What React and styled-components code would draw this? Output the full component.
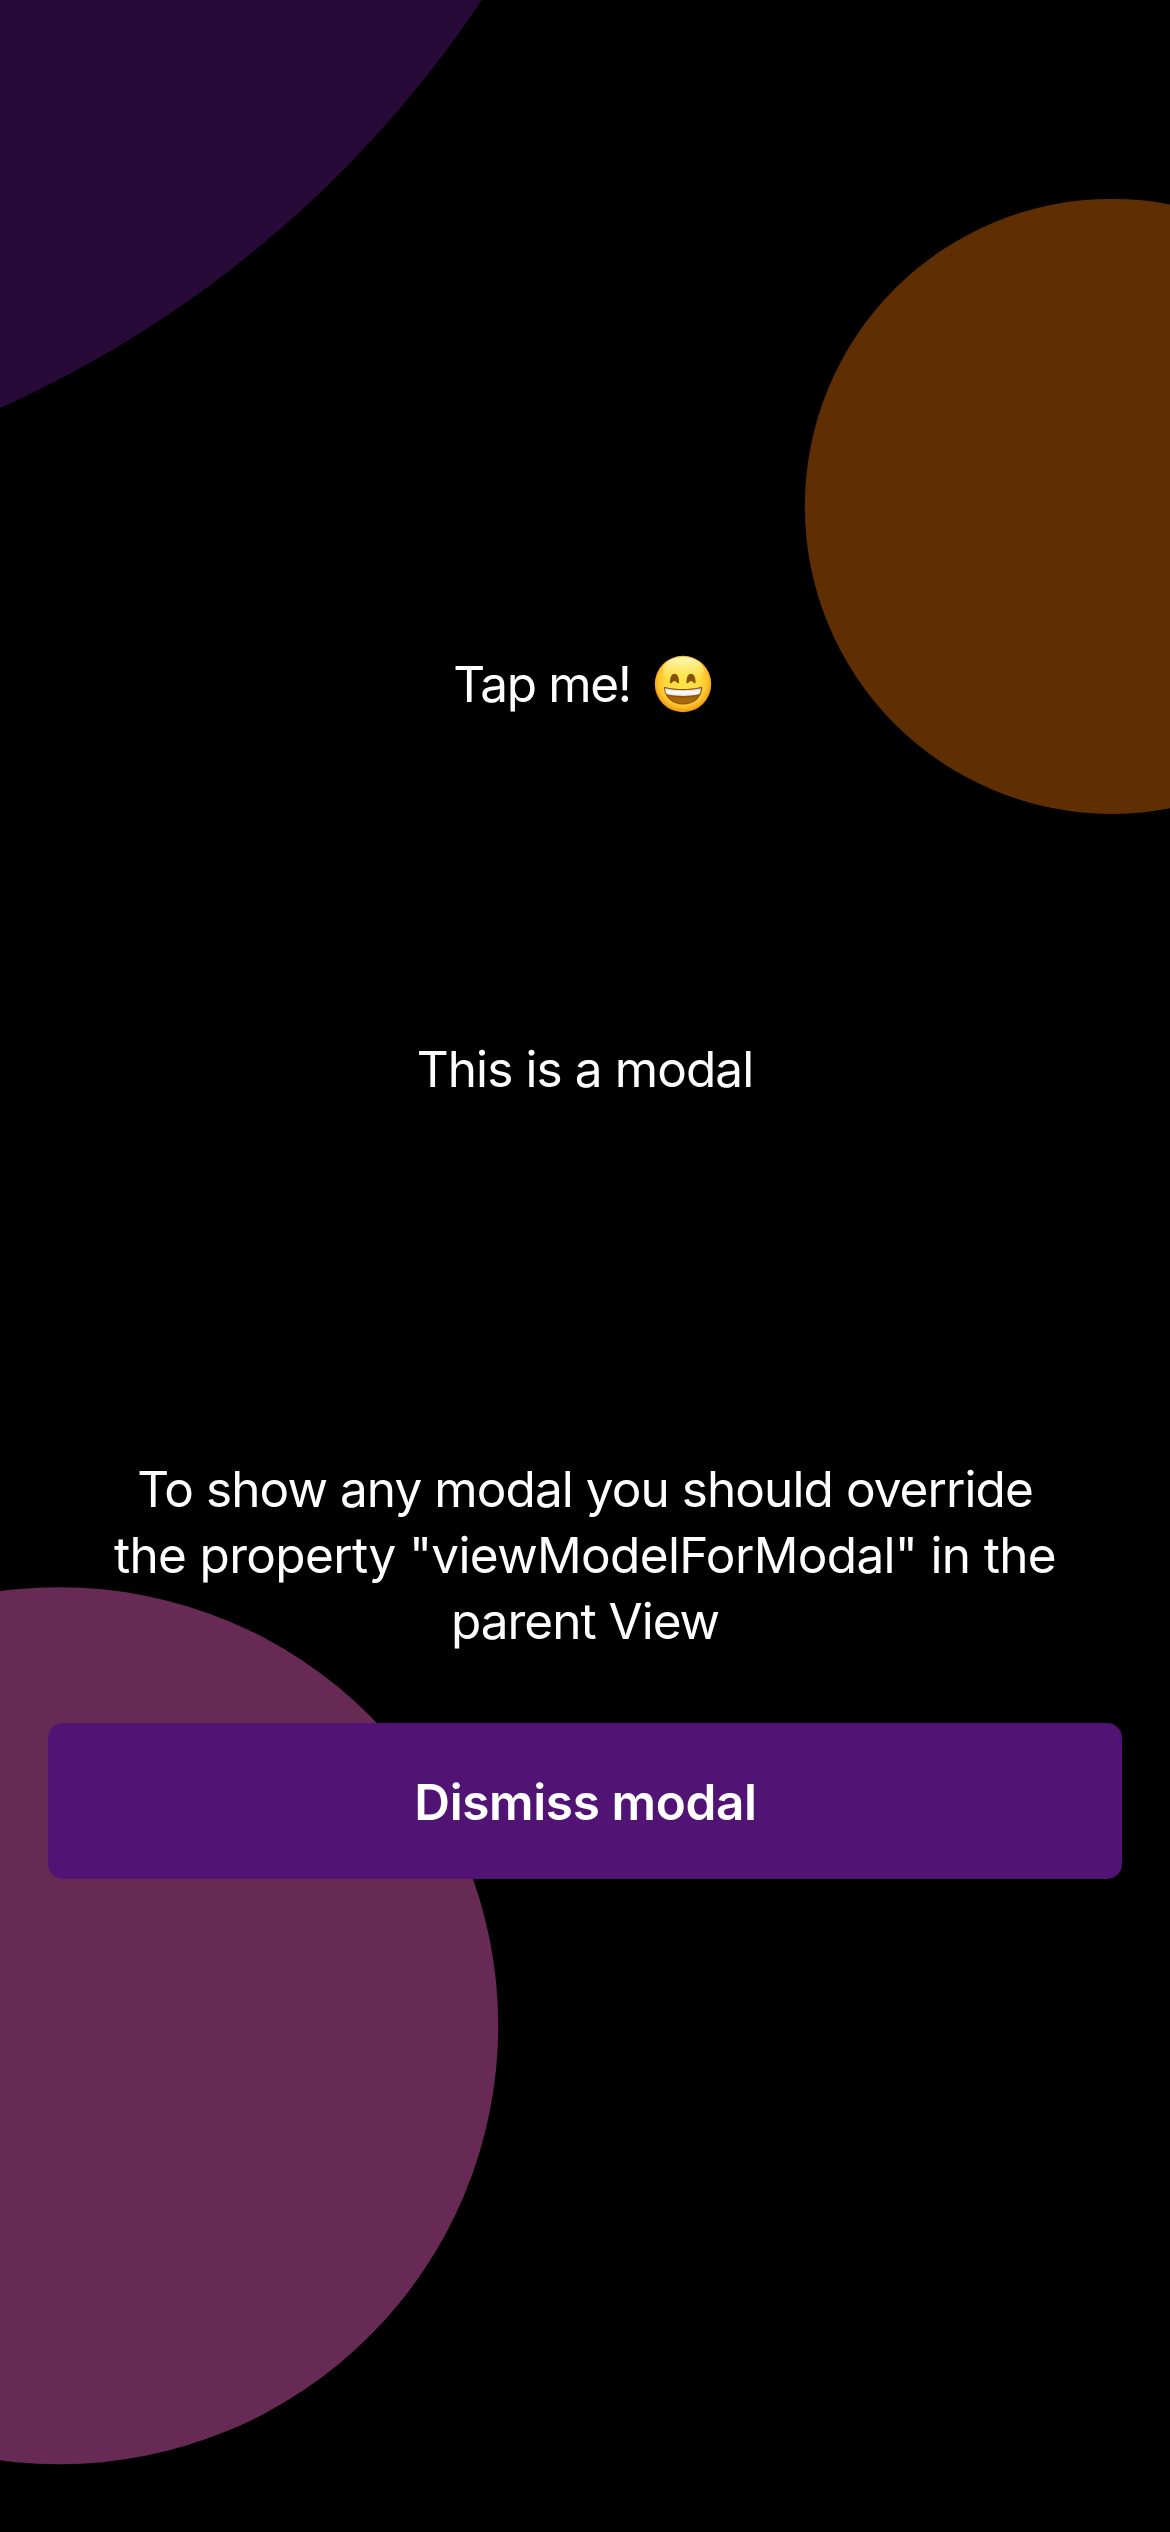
import React from "react";
import styled, { createGlobalStyle } from "styled-components";

const GlobalStyle = createGlobalStyle`
  * { box-sizing: border-box; }
  body { margin: 0; background: #000; }
`;

const Screen = styled.main`
  position: relative;
  width: 1170px;
  height: 2532px;
  overflow: hidden;
  background: #000;
  color: #fff;
  font-family: Inter, "Liberation Sans", sans-serif;
  font-size: 49.5px;
`;

const Bubble = styled.div`
  position: absolute;
  left: ${(p) => p.$x}px;
  top: ${(p) => p.$y}px;
  width: ${(p) => p.$size}px;
  height: ${(p) => p.$size}px;
  border-radius: 50%;
  background: ${(p) => p.$color};
  transform: translate(-50%, -50%);
`;

const Content = styled.div`
  position: relative;
  display: flex;
  flex-direction: column;
  height: 100%;
  padding: 651px 48px 0;
`;

const TapLabel = styled.button`
  display: flex;
  align-items: center;
  justify-content: center;
  align-self: center;
  gap: 23px;
  height: 66px;
  padding: 0 5px 0 0;
  border: 0;
  background: none;
  color: inherit;
  font: inherit;
  letter-spacing: -1.35px;
`;

const Emoji = styled.svg`
  display: block;
  width: 58px;
  height: 58px;
`;

const Title = styled.p`
  margin: 319px 0 0;
  line-height: 66px;
  text-align: center;
  letter-spacing: -0.9px;
`;

const Description = styled.p`
  margin: 354px 0 0;
  line-height: 66px;
  text-align: center;
`;

const Line = styled.span`
  display: block;
  white-space: nowrap;
  letter-spacing: ${(p) => p.$tracking}px;
`;

const DismissButton = styled.button`
  height: 156px;
  margin-top: 69px;
  padding: 2px 0 0 1px;
  border: 0;
  border-radius: 15px;
  background: #511474;
  color: #fff;
  font: inherit;
  font-weight: 600;
  letter-spacing: -0.38px;
`;

function GrinningFace() {
  return (
    <Emoji viewBox="0 0 58 58" aria-label="😄" role="img">
      <defs>
        <radialGradient id="skin" cx="50%" cy="46%" r="55%">
          <stop offset="0" stopColor="#ffe544" />
          <stop offset="0.55" stopColor="#ffda3c" />
          <stop offset="0.8" stopColor="#fdc22c" />
          <stop offset="1" stopColor="#ef8d0e" />
        </radialGradient>
        <linearGradient id="shine" x1="0" y1="0" x2="0" y2="1">
          <stop offset="0" stopColor="#fffcc8" stopOpacity="0.95" />
          <stop offset="1" stopColor="#ffee60" stopOpacity="0" />
        </linearGradient>
        <linearGradient id="teeth" x1="0" y1="0" x2="0" y2="1">
          <stop offset="0" stopColor="#d0d0d6" />
          <stop offset="0.5" stopColor="#fff" />
          <stop offset="1" stopColor="#e3e3e8" />
        </linearGradient>
      </defs>
      <circle cx="29" cy="29" r="28.2" fill="url(#skin)" />
      <ellipse cx="29" cy="15.5" rx="20.5" ry="13.5" fill="url(#shine)" />
      <g fill="#87500a" stroke="#87500a" strokeWidth="2.4" strokeLinecap="round" strokeLinejoin="round">
        <path d="M17 27c.3-4.8 1.500-7 3.500-7s3.200 2.200 3.500 7c-1.800-3-5.200-3-7 0z" />
        <path d="M33.500 27c.3-4.800 1.500-7 3.500-7s3.200 2.200 3.500 7c-1.800-3-5.200-3-7 0z" />
      </g>
      <path d="M10 33c-.5-.8.2-1.300 1.200-1 11.500 2.700 24.100 2.700 35.600 0 1-.3 1.700.2 1.500 1-.8 10-8.500 16.500-19.100 16.500S10.800 43 10 33z" fill="#8f5703" />
      <path d="M14.500 41c8.500 2.400 20.500 2.400 29 0-3 4.800-8 7.300-14.500 7.300S17.500 45.800 14.500 41z" fill="#a8690a" />
      <path d="M11 33.300c11.500 2.500 24.500 2.500 36 0-.1 2.800-.9 4.800-2 6-10.500 2.300-21.500 2.300-32 0-1.100-1.200-1.900-3.200-2-6z" fill="url(#teeth)" />
    </Emoji>
  );
}

export default function App() {
  return (
    <>
      <GlobalStyle />
      <Screen>
        <Bubble $x={-468} $y={-633} $size={2281.5} $color="#270a37" />
        <Bubble $x={1111.5} $y={506.4} $size={614.25} $color="#5f2f03" />
        <Bubble $x={59} $y={2025.6} $size={877.5} $color="#672a55" />
        <Content>
          <TapLabel>
            <span>Tap me!</span>
            <GrinningFace />
          </TapLabel>
          <Title>This is a modal</Title>
          <Description>
            <Line $tracking={-0.93}>To show any modal you should override</Line>
            <Line $tracking={-0.655}>the property "viewModelForModal" in the</Line>
            <Line $tracking={-1}>parent View</Line>
          </Description>
          <DismissButton>Dismiss modal</DismissButton>
        </Content>
      </Screen>
    </>
  );
}
